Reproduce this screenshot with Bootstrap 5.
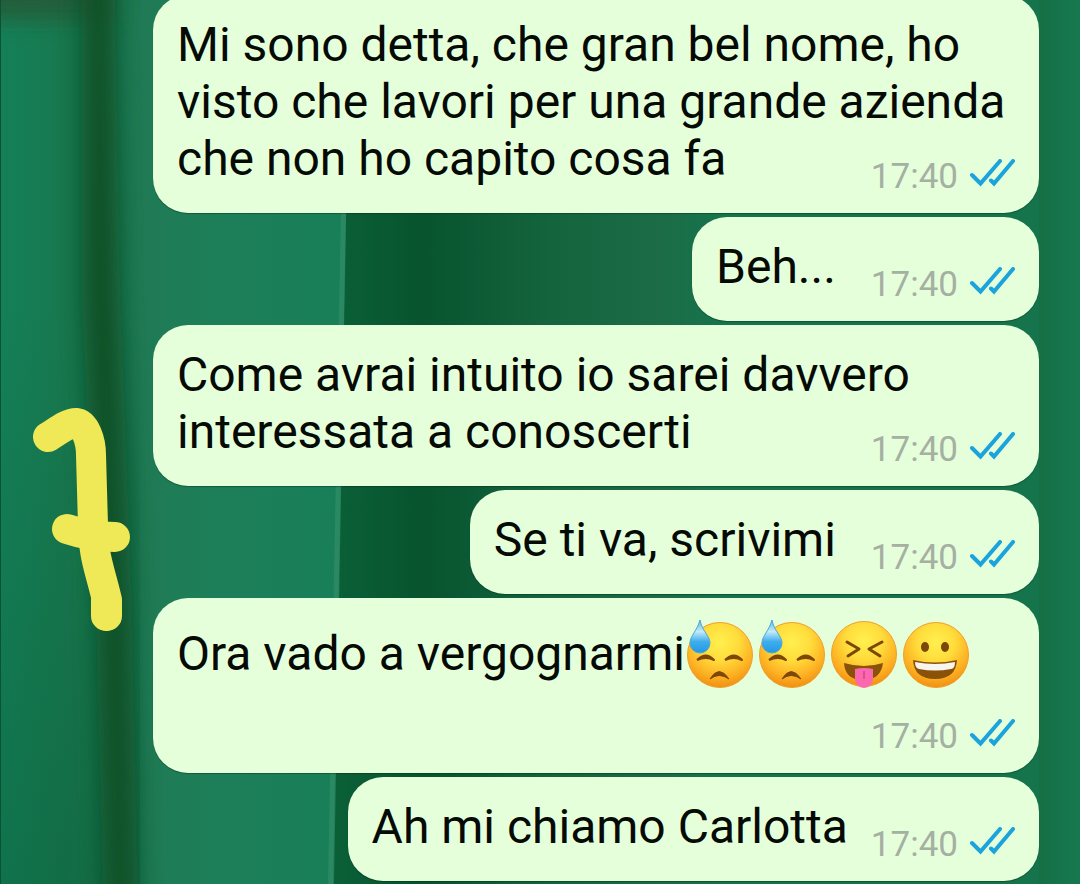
<!DOCTYPE html>
<html lang="it">
<head>
<meta charset="utf-8">
<meta name="viewport" content="width=device-width, initial-scale=1">
<title>Chat</title>
<link href="https://cdn.jsdelivr.net/npm/bootstrap@5.3.0/dist/css/bootstrap.min.css" rel="stylesheet">
<style>
  body { font-family: Roboto, "Liberation Sans", sans-serif; background: #146f49; }
  .chat { padding: 0 41px 3px 153px; gap: 4px; isolation: isolate; }
  .wallpaper { z-index: -1; }
  .bubble {
    display: flow-root; max-width: 100%; padding: 21px 24px 26px; border-radius: 35px;
    background: #e5ffdb; color: #050a05; box-shadow: 0 1px 1px rgba(0, 40, 20, .4);
    font-size: 48px; line-height: 57px;
  }
  .stamp { gap: 11px; font-size: 35px; line-height: 36px; color: #a5b0a2; margin: 29px 0 -8px 35px; }
  .stamp-near { margin-left: 23px; }
  .ticks { width: 46px; height: 30px; }
  .emoji { width: 72px; height: 71px; vertical-align: -20px; }
  .doodle { left: 24px; top: 400px; width: 115px; height: 240px; }
</style>
</head>
<body>
<svg width="0" height="0" class="position-absolute" aria-hidden="true">
  <defs>
    <symbol id="ticks" viewBox="0 0 46 30">
      <g fill="none" stroke="#1ba3dc" stroke-width="4" stroke-linecap="round">
        <path d="M3 16 11.500 24.500 31 2"/>
        <path d="M22 21.500 25 24.500 44 2"/>
      </g>
    </symbol>
    <radialGradient id="face" cx=".5" cy=".3" r=".72">
      <stop offset="0" stop-color="#fff04f"/><stop offset=".4" stop-color="#ffdc3b"/>
      <stop offset=".75" stop-color="#fdb022"/><stop offset="1" stop-color="#ef8b12"/>
    </radialGradient>
    <linearGradient id="drop" x2="0" y2="1">
      <stop offset="0" stop-color="#5fb4dc"/><stop offset=".35" stop-color="#c3ebfa"/>
      <stop offset=".65" stop-color="#41aeec"/><stop offset="1" stop-color="#2098e6"/>
    </linearGradient>
    <symbol id="sweat" viewBox="0 0 72 71">
      <circle cx="35" cy="36" r="32.500" fill="url(#face)" stroke="#f0a02b"/>
      <path d="M12 41q9-9 17 0q-8-4-17 0M40 41q9-9 17 0q-8-4-17 0" fill="#7c4708" stroke="#7c4708" stroke-width="2" stroke-linejoin="round"/>
      <path d="M25 60q9-15 19 0q-10-7-19 0Z" fill="#7c4708" stroke="#7c4708" stroke-linejoin="round"/>
      <path d="M15 1C12 12 5 17 5 24a10 10 0 0 0 20 0C25 17 17 12 15 1Z" fill="url(#drop)" stroke="#4ba8d5"/>
    </symbol>
    <symbol id="squint" viewBox="0 0 72 71">
      <circle cx="35" cy="35" r="32.500" fill="url(#face)" stroke="#f0a02b"/>
      <path d="M18 23 30 30 19 37M53 23 40 30 51 37" fill="none" stroke="#7c4708" stroke-width="3" stroke-linejoin="round" stroke-linecap="round"/>
      <path d="M15 44q20 6 39 0q-2 17-20 17T15 44Z" fill="#8a5208"/>
      <path d="M26 50q9-2 18 0V60a9 9 0 0 1-18 0Z" fill="#fb68ae"/>
      <path d="M35 52v8" stroke="#dd4d91" stroke-width="2"/>
    </symbol>
    <symbol id="grin" viewBox="0 0 72 71">
      <circle cx="35" cy="36" r="32.500" fill="url(#face)" stroke="#f0a02b"/>
      <ellipse cx="24" cy="28" rx="4" ry="5" fill="#7c4708"/><ellipse cx="44" cy="28" rx="4" ry="5" fill="#7c4708"/>
      <path d="M12 41q22 5 44 0q-1 19-22 19T12 41Z" fill="#8a5208"/>
      <path d="M14 43q20 4 40 0q0 7-4 7-16 3-32 0-4-1-4-7Z" fill="#f7f5ee"/>
    </symbol>
  </defs>
</svg>

<main class="chat position-relative d-flex flex-column justify-content-end align-items-end vh-100 overflow-hidden">
  <svg class="wallpaper position-absolute top-0 start-0 w-100 h-100" viewBox="0 0 1080 884" preserveAspectRatio="none" aria-hidden="true">
    <defs>
      <linearGradient id="cloth" gradientUnits="userSpaceOnUse" x2="1080">
        <stop offset="0" stop-color="#148058"/><stop offset=".06" stop-color="#18784f"/>
        <stop offset=".13" stop-color="#1f7a55"/><stop offset=".2" stop-color="#1d7f59"/><stop offset=".31" stop-color="#187f59"/>
        <stop offset=".96" stop-color="#166f45"/><stop offset="1" stop-color="#16784f"/>
      </linearGradient>
      <linearGradient id="shade" gradientUnits="userSpaceOnUse" x1="340" x2="720">
        <stop offset="0" stop-color="#0a5f37"/><stop offset=".22" stop-color="#07542f"/>
        <stop offset=".55" stop-color="#14643e"/><stop offset=".85" stop-color="#1b6c47"/><stop offset="1" stop-color="#15744b"/>
      </linearGradient>
      <linearGradient id="depth" x2="0" y2="1">
        <stop offset="0" stop-color="#004b29" stop-opacity="0"/><stop offset="1" stop-color="#004b29" stop-opacity=".25"/>
      </linearGradient>
      <filter id="soft" x="-1" width="3" y="-.1" height="1.2"><feGaussianBlur stdDeviation="12 8"/></filter>
      <filter id="haze" x="-.5" width="2" y="-1" height="3"><feGaussianBlur stdDeviation="14 10"/></filter>
    </defs>
    <path d="M0 0H1080V884H0Z" fill="url(#cloth)"/>
    <path d="M-40-40H110V20H-40Z" fill="#205f3a" filter="url(#haze)"/>
    <path d="M350 0H1039V884H333Z" fill="url(#shade)"/>
    <path d="M345 0H350L334 884H328Z" fill="#369069" opacity=".6"/>
    <path d="M0 300H140V884H0Z" fill="url(#depth)"/>
    <path d="M82-30H114L120 300 130 560 138 920H104L95 560 82 300Z" fill="#0d4f26" filter="url(#soft)"/>
    <path d="M0 0H1V884H0Z" fill="#0b5234"/>
  </svg>

  <article class="bubble">Mi sono detta, che gran bel nome, ho visto che lavori per una grande azienda che non ho capito cosa fa<span class="stamp float-end d-flex align-items-start"><time>17:40</time><svg class="ticks" role="img" aria-label="Letto"><use href="#ticks"/></svg></span></article>
  <article class="bubble">Beh...<span class="stamp float-end d-flex align-items-start"><time>17:40</time><svg class="ticks" role="img" aria-label="Letto"><use href="#ticks"/></svg></span></article>
  <article class="bubble">Come avrai intuito io sarei davvero interessata a conoscerti<span class="stamp float-end d-flex align-items-start"><time>17:40</time><svg class="ticks" role="img" aria-label="Letto"><use href="#ticks"/></svg></span></article>
  <article class="bubble">Se ti va, scrivimi<span class="stamp float-end d-flex align-items-start"><time>17:40</time><svg class="ticks" role="img" aria-label="Letto"><use href="#ticks"/></svg></span></article>
  <article class="bubble">Ora vado a vergognarmi<svg class="emoji" role="img" aria-label="Faccina sudata"><use href="#sweat"/></svg><svg class="emoji" role="img" aria-label="Faccina sudata"><use href="#sweat"/></svg><svg class="emoji" role="img" aria-label="Linguaccia"><use href="#squint"/></svg><svg class="emoji" role="img" aria-label="Sorriso"><use href="#grin"/></svg><span class="stamp float-end d-flex align-items-start"><time>17:40</time><svg class="ticks" role="img" aria-label="Letto"><use href="#ticks"/></svg></span></article>
  <article class="bubble">Ah mi chiamo Carlotta<span class="stamp stamp-near float-end d-flex align-items-start"><time>17:40</time><svg class="ticks" role="img" aria-label="Letto"><use href="#ticks"/></svg></span></article>

  <svg class="doodle position-absolute" viewBox="24 400 115 240" aria-hidden="true">
    <g fill="none" stroke="#efe957" stroke-width="30" stroke-linecap="round" stroke-linejoin="round">
      <path d="M48 437C59 430 68 423 76 423C85 424 91 440 91 455L93 525C94 560 99 566 107 600V616"/>
      <path d="M67 529C82 534 99 537 115 537M106 600V616"/>
    </g>
  </svg>
</main>
<script src="https://cdn.jsdelivr.net/npm/bootstrap@5.3.0/dist/js/bootstrap.bundle.min.js"></script>
</body>
</html>
